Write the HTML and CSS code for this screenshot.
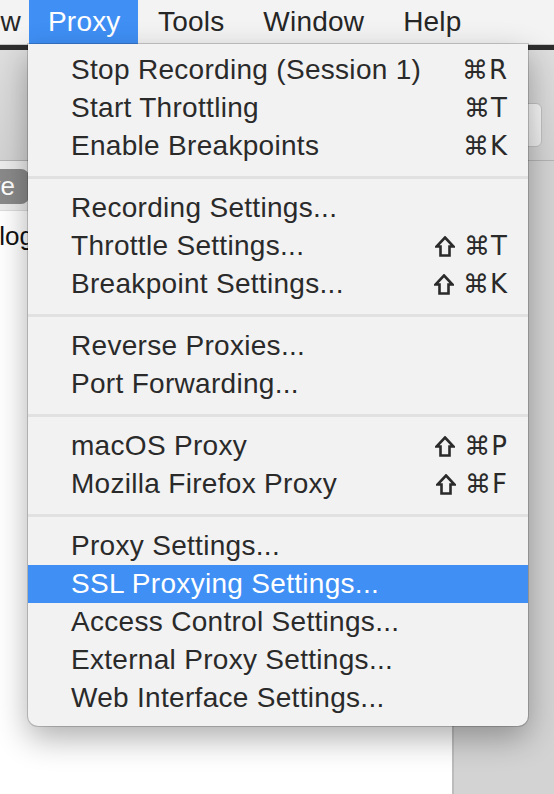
FILE: index.html
```html
<!DOCTYPE html>
<html>
<head>
<meta charset="utf-8">
<link rel="stylesheet" href="styles.css">
</head>
<body>
<div class="menubar">
  <span class="mb-item mb-view">View</span>
  <span class="mb-item mb-active">Proxy</span>
  <span class="mb-item">Tools</span>
  <span class="mb-item">Window</span>
  <span class="mb-item">Help</span>
</div>
<div class="window">
  <div class="toolbar">
    <div class="tb-button"></div>
  </div>
  <div class="content">
    <div class="main">
      <div class="clip">
        <span class="pill">Save</span>
      </div>
      <div class="clip">
        <span class="label">Catalog</span>
      </div>
    </div>
    <div class="side"></div>
  </div>
</div>

<div class="menu">
  <div class="row"><span>Stop Recording (Session 1)</span><span class="key">⌘R</span></div>
  <div class="row"><span>Start Throttling</span><span class="key">⌘T</span></div>
  <div class="row"><span>Enable Breakpoints</span><span class="key">⌘K</span></div>
  <div class="sep"></div>
  <div class="row"><span>Recording Settings...</span></div>
  <div class="row"><span>Throttle Settings...</span><span class="key"><svg class="shift" viewBox="0 0 20 21"><path d="M10 1.5 L18.5 10.5 H14.5 V19.5 H5.5 V10.5 H1.5 Z"/></svg>⌘T</span></div>
  <div class="row"><span>Breakpoint Settings...</span><span class="key"><svg class="shift" viewBox="0 0 20 21"><path d="M10 1.5 L18.5 10.5 H14.5 V19.5 H5.5 V10.5 H1.5 Z"/></svg>⌘K</span></div>
  <div class="sep"></div>
  <div class="row"><span>Reverse Proxies...</span></div>
  <div class="row"><span>Port Forwarding...</span></div>
  <div class="sep"></div>
  <div class="row"><span>macOS Proxy</span><span class="key"><svg class="shift" viewBox="0 0 20 21"><path d="M10 1.5 L18.5 10.5 H14.5 V19.5 H5.5 V10.5 H1.5 Z"/></svg>⌘P</span></div>
  <div class="row"><span>Mozilla Firefox Proxy</span><span class="key"><svg class="shift" viewBox="0 0 20 21"><path d="M10 1.5 L18.5 10.5 H14.5 V19.5 H5.5 V10.5 H1.5 Z"/></svg>⌘F</span></div>
  <div class="sep"></div>
  <div class="row"><span>Proxy Settings...</span></div>
  <div class="row selected"><span>SSL Proxying Settings...</span></div>
  <div class="row"><span>Access Control Settings...</span></div>
  <div class="row"><span>External Proxy Settings...</span></div>
  <div class="row"><span>Web Interface Settings...</span></div>
</div>
</body>
</html>
```

FILE: styles.css
```css
* { box-sizing: border-box; }
html, body {
  margin: 0;
  padding: 0;
}
body {
  width: 554px;
  height: 794px;
  overflow: hidden;
  background: #ffffff;
  font-family: "Liberation Sans", Arial, sans-serif;
  color: #2a2a2a;
  position: relative;
}

.menubar {
  height: 45px;
  background: #f3f3f3;
  border-bottom: 1px solid #c9c9c9;
  display: flex;
  align-items: stretch;
  font-size: 28px;
  letter-spacing: 0.2px;
}
.mb-item {
  display: flex;
  align-items: center;
  padding: 0 19px 0 20px;
  color: #262626;
}
.mb-view {
  margin-left: -60px;
  padding-right: 8px;
}
.mb-active {
  background: #3f8ff5;
  color: #ffffff;
  padding: 0 19px 0 19px;
  width: 109px;
}

.window {
  display: flex;
  flex-direction: column;
  height: 749px;
}
.toolbar {
  height: 116px;
  border-top: 5px solid #2e2e2e;
  background: linear-gradient(#dedede, #d3d3d3);
  border-bottom: 1px solid #b4b4b4;
  display: flex;
  justify-content: flex-end;
  align-items: center;
  padding-right: 12px;
}
.tb-button {
  width: 44px;
  height: 44px;
  margin-top: 40px;
  background: linear-gradient(#f7f7f7, #ededed);
  border: 1px solid #c2c2c2;
  border-radius: 6px;
}
.content {
  flex: 1;
  display: flex;
}
.main {
  width: 452px;
  background: #ffffff;
  display: flex;
  flex-direction: column;
}
.main .clip {
  width: 28px;
  display: flex;
  justify-content: flex-end;
  overflow: hidden;
  white-space: nowrap;
}
.main .clip:first-child {
  background: #ececec;
  padding: 8px 0 6px;
  border-bottom: 1px solid #dcdcdc;
}
.pill {
  flex: none;
  background: #8a8a8a;
  color: #ffffff;
  font-size: 26px;
  line-height: 35px;
  padding: 0 14px 0 20px;
  border-radius: 8px;
  margin-right: -1px;
}
.label {
  flex: none;
  font-size: 26px;
  line-height: 30px;
  margin-top: 10px;
  margin-right: -6px;
  color: #111;
}
.side {
  flex: 1;
  background: #d3d3d3;
  border-left: 2px solid #bcbcbc;
}

.menu {
  position: absolute;
  left: 28px;
  top: 44px;
  width: 500px;
  height: 682px;
  background: #f2f2f2;
  border-radius: 0 0 10px 10px;
  box-shadow: 0 0 0 1px rgba(0, 0, 0, 0.18), 0 12px 32px rgba(0, 0, 0, 0.32);
  padding-top: 7px;
  font-size: 28px;
  letter-spacing: 0.3px;
}
.row {
  height: 38px;
  display: flex;
  align-items: center;
  justify-content: space-between;
  padding: 0 20px 0 43px;
  color: #2a2a2a;
}
.row.selected {
  background: #3f8ff5;
  color: #ffffff;
}
.key {
  display: flex;
  align-items: center;
  font-family: "DejaVu Sans", "Liberation Sans", sans-serif;
  font-size: 26px;
  letter-spacing: 1px;
}
.shift {
  width: 20px;
  height: 21px;
  margin-right: 9px;
  fill: none;
  stroke: #2a2a2a;
  stroke-width: 2.6;
  stroke-linejoin: miter;
}
.sep {
  height: 3px;
  background: #e1e1e1;
  margin: 11px 0 10px;
}
```
